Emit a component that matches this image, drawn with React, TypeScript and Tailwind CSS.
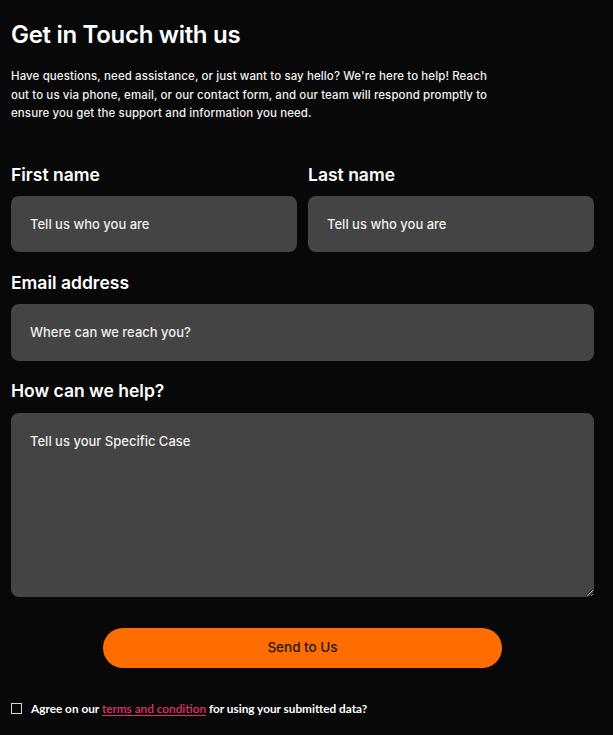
import React from 'react';

const App: React.FC = () => {
  return (
    <div className="min-h-[735px] bg-[#080808] text-white font-['Inter','Noto_Sans',sans-serif] pl-[11px] pr-[19px] pt-[20px] pb-6">
      {/* Header */}
      <h1 className="text-[24px] font-semibold leading-[30px] tracking-[-0.3px]">Get in Touch with us</h1>
      <p className="mt-[17px] w-[494px] text-[11.5px] leading-[18.5px] font-medium tracking-[0.1px] text-[#f2f2f2]">
        Have questions, need assistance, or just want to say hello? We're here to help! Reach out to us via phone, email, or our contact form, and our team will respond promptly to ensure you get the support and information you need.
      </p>

      {/* Form */}
      <form className="mt-[40px] flex flex-col">
        <div className="grid grid-cols-2 gap-[11px]">
          <label className="flex flex-col">
            <span className="text-[17.5px] font-semibold leading-[24px]">First name</span>
            <input
              className="mt-[9px] h-[56px] rounded-[8px] bg-[#444444] px-[19px] text-[13px] font-medium text-white placeholder:text-[#eeeeee] outline-none"
              placeholder="Tell us who you are"
            />
          </label>
          <label className="flex flex-col">
            <span className="text-[17.5px] font-semibold leading-[24px]">Last name</span>
            <input
              className="mt-[9px] h-[56px] rounded-[8px] bg-[#444444] px-[19px] text-[13px] font-medium text-white placeholder:text-[#eeeeee] outline-none"
              placeholder="Tell us who you are"
            />
          </label>
        </div>

        <label className="mt-[19px] flex flex-col">
          <span className="text-[17.5px] font-semibold leading-[24px]">Email address</span>
          <input
            className="mt-[9px] h-[57px] rounded-[8px] bg-[#444444] px-[19px] text-[13px] font-medium text-white placeholder:text-[#eeeeee] outline-none"
            placeholder="Where can we reach you?"
          />
        </label>

        <label className="mt-[18px] flex flex-col">
          <span className="text-[17.5px] font-semibold leading-[24px]">How can we help?</span>
          <textarea
            className="mt-[10px] h-[184px] rounded-[8px] bg-[#444444] px-[19px] pt-[19px] text-[13px] font-medium text-white placeholder:text-[#eeeeee] outline-none"
            placeholder="Tell us your Specific Case"
          />
        </label>

        <div className="mt-[31px] flex justify-center">
          <button
            type="button"
            className="h-[40px] w-[399px] rounded-full bg-[#ff6d00] text-[13.5px] font-medium text-[#1a1a1a]"
          >
            Send to Us
          </button>
        </div>

        <div className="mt-[32px] flex items-center gap-[9px] font-['Lato',sans-serif] text-[11.8px] font-bold">
          <span className="inline-block h-[11px] w-[11px] border-[1.5px] border-[#d8d8d8] bg-transparent" />
          <span>
            Agree on our{' '}
            <a className="text-[#e0306a] underline underline-offset-2 font-semibold" href="#">
              terms and condition
            </a>{' '}
            for using your submitted data?
          </span>
        </div>
      </form>
    </div>
  );
};

export default App;
